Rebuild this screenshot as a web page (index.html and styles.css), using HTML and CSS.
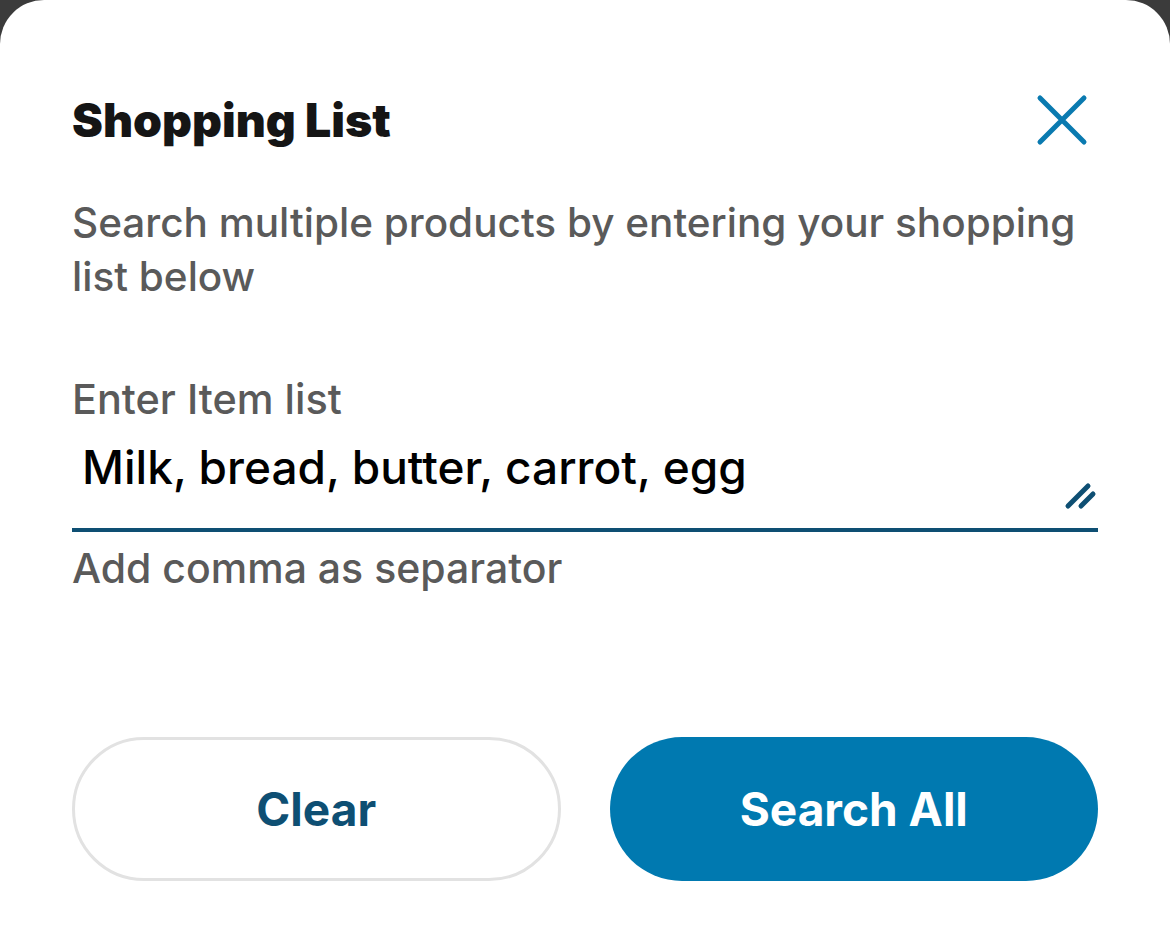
FILE: index.html
```html
<!DOCTYPE html>
<html lang="en">
<head>
<meta charset="utf-8">
<title>Shopping List</title>
<link rel="stylesheet" href="styles.css">
</head>
<body>
<div class="sheet">
  <header class="head">
    <h1 class="title">Shopping List</h1>
    <button class="close" aria-label="Close">
      <svg width="52" height="52" viewBox="0 0 52 52"><path d="M4 4 L48 48 M48 4 L4 48" stroke="#0a7ab0" stroke-width="5" stroke-linecap="round" fill="none"/></svg>
    </button>
  </header>
  <p class="desc">Search multiple products by entering your shopping list below</p>
  <div class="field">
    <label class="label">Enter Item list</label>
    <div class="input">
      <span class="value">Milk, bread, butter, carrot, egg</span>
      <svg class="grip" width="34" height="30" viewBox="0 0 34 30"><path d="M4 26 L24 6 M17 26 L29 14" stroke="#0e4f73" stroke-width="5" stroke-linecap="round" fill="none"/></svg>
    </div>
    <div class="hint">Add comma as separator</div>
  </div>
  <div class="actions">
    <button class="btn btn-outline">Clear</button>
    <button class="btn btn-fill">Search All</button>
  </div>
</div>
</body>
</html>
```
FILE: styles.css
```css
html, body { margin: 0; padding: 0; }
body {
  background: #3b3b3b;
  font-family: Inter, "Noto Sans", sans-serif;
  width: 1170px;
  height: 929px;
  overflow: hidden;
}
.sheet {
  background: #fff;
  border-radius: 44px 44px 0 0;
  height: 929px;
  box-sizing: border-box;
  padding: 0 72px;
  display: flex;
  flex-direction: column;
}
.head {
  display: flex;
  justify-content: space-between;
  align-items: center;
  margin-top: 92px;
  height: 56px;
}
.title {
  margin: 0;
  font-size: 46.4px;
  font-weight: 900;
  color: #151515;
}
.close {
  background: none;
  border: none;
  padding: 0;
  margin-right: 10px;
  width: 52px;
  height: 52px;
  display: flex;
}
.desc {
  margin: 48px 0 0;
  font-size: 40.5px;
  line-height: 54px;
  color: #5a5a5a;
  font-weight: 500;
}
.field {
  margin-top: 70px;
  display: flex;
  flex-direction: column;
}
.label {
  font-size: 41.4px;
  line-height: 50px;
  color: #5a5a5a;
  font-weight: 500;
}
.input {
  display: flex;
  align-items: flex-end;
  justify-content: space-between;
  border-bottom: 4px solid #0e4f73;
  padding: 4px 0 18px 10px;
  margin-top: 14px;
}
.value {
  font-size: 46px;
  line-height: 50px;
  color: #000;
  font-weight: 500;
  margin-bottom: 18px;
}
.hint {
  margin-top: 11px;
  font-size: 41px;
  line-height: 50px;
  color: #5a5a5a;
  font-weight: 500;
}
.actions {
  margin-top: 144px;
  display: grid;
  grid-template-columns: 1fr 1fr;
  gap: 49px;
}
.btn {
  box-sizing: border-box;
  height: 144px;
  border-radius: 72px;
  font-family: Inter, "Noto Sans", sans-serif;
  font-size: 46px;
  font-weight: 700;
}
.btn-outline {
  background: #fff;
  border: 3px solid #e2e2e2;
  color: #0e4f73;
}
.btn-fill {
  background: #0079b0;
  border: none;
  color: #fff;
}
```
